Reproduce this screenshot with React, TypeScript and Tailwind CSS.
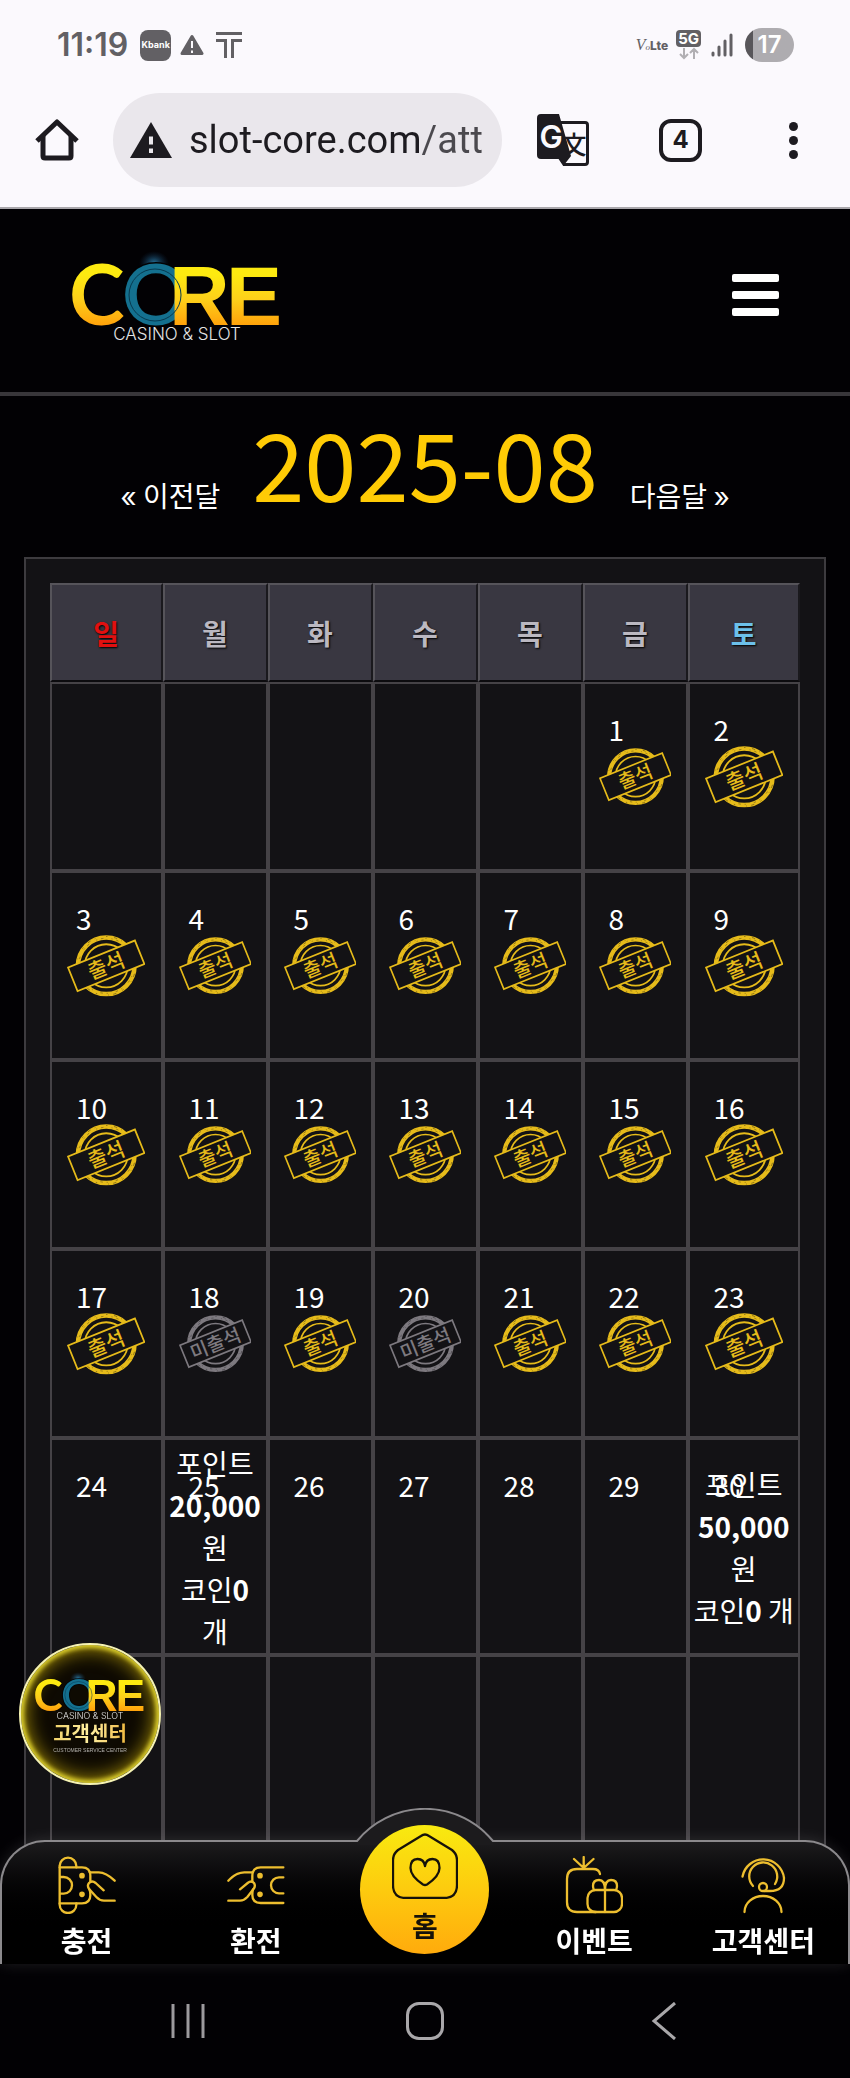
import { ReactNode } from "react";

const GOLD = "#edbe2f";

interface LogoProps {
  id: string;
  className?: string;
}

const CoreLogo = ({ id, className }: LogoProps) => {
  return (
    <svg viewBox="0 0 210 92" className={`overflow-visible ${className}`} role="img" aria-label="CORE CASINO & SLOT">
      <defs>
        <linearGradient id={`${id}-gold`} gradientUnits="userSpaceOnUse" x1="0" y1="16" x2="0" y2="78">
          <stop offset="0.15" stopColor="#fdea10" />
          <stop offset="0.55" stopColor="#fdd01a" />
          <stop offset="1" stopColor="#ff9f0a" />
        </linearGradient>
        <radialGradient id={`${id}-glow`}>
          <stop offset="0" stopColor="#2f8fc0" stopOpacity="0.8" />
          <stop offset="1" stopColor="#12355a" stopOpacity="0" />
        </radialGradient>
      </defs>
      <ellipse cx="82" cy="14" rx="15" ry="12" fill={`url(#${id}-glow)`} />
      <g fontFamily="Lato, sans-serif" fontSize="84" fontWeight="700">
        <text x="-3 50 97 154" y="76" fill={`url(#${id}-gold)`}>
          C
          <tspan fill="#14708f" stroke="#020204" strokeWidth="3" paintOrder="stroke">O</tspan>
          <tspan fontFamily="'Liberation Sans'">RE</tspan>
        </text>
      </g>
      <circle cx="83" cy="46" r="26" fill="none" stroke="#073a50" strokeWidth="1" />
      <text x="105" y="91" textAnchor="middle" fontFamily="Inter, sans-serif" fontSize="17" fontWeight="300" fill="#e4e4e4">
        CASINO &amp; SLOT
      </text>
    </svg>
  );
};

const Stamp = ({ missed }: { missed?: boolean }) => {
  const color = missed ? "#7d797f" : "#e6bb1a";
  return (
    <svg viewBox="-2 -2 221 180" className="mx-auto w-[72%]">
      <circle cx="109" cy="88" r="80" fill="none" stroke={color} strokeWidth="13" />
      <circle cx="109" cy="88" r="83" fill="none" stroke="#131215" strokeOpacity="0.6" strokeWidth="2" strokeDasharray="4 19 9 13 2 31" />
      <circle cx="109" cy="88" r="78" fill="none" stroke="#131215" strokeOpacity="0.5" strokeWidth="2" strokeDasharray="7 23 3 11" />
      <circle cx="109" cy="88" r="61" fill="none" stroke={color} strokeWidth="5" />
      <g transform="rotate(-22 109 88)">
        <rect x="7" y="52" width="204" height="72" fill="#131215" stroke={color} strokeWidth="5" />
        <text x="109" y="109" textAnchor="middle" fontFamily="'Noto Sans CJK KR', sans-serif" fontSize="58" fontWeight="500" fill={color}>
          {missed ? "미출석" : "출석"}
        </text>
      </g>
    </svg>
  );
};

const StatusBar = () => {
  return (
    <div className="flex h-[34px] items-center justify-between pr-14 pl-[57px] text-[#626064]">
      <div className="flex items-center">
        <span className="font-[Inter] text-[32px] leading-[34px] font-semibold">11:19</span>
        <span className="ml-3 grid h-[31px] w-[31px] place-content-center rounded-lg bg-[#626064] font-[Inter] text-[9px] font-bold text-white">
          Kbank
        </span>
        <svg viewBox="0 0 24 22" className="ml-[9px] w-6">
          <path d="M12 2.500 22 19.500H2Z" fill="#626064" stroke="#626064" strokeWidth="3" strokeLinejoin="round" />
          <path d="M12 7v7M12 16.500v2.500" stroke="#fbf9fd" strokeWidth="2" />
        </svg>
        <svg viewBox="0 0 26 26" className="ml-3 w-[26px]" fill="none" stroke="#626064" strokeWidth="3">
          <path d="M0 1.500H26M0 8.500H9.500V26M26 8.500H16.500V26" />
        </svg>
      </div>
      <div className="flex items-center">
        <span className="flex items-baseline">
          <i className="font-['Liberation_Serif'] text-[16px]">V</i>
          <i className="font-['Liberation_Serif'] text-[9px]">o</i>
          <b className="font-[Inter] text-[12px] font-extrabold">Lte</b>
        </span>
        <span className="ml-2 flex flex-col items-center">
          <span className="rounded-[4px] bg-[#626064] px-[2px] font-[Inter] text-[15px] leading-[17px] font-bold text-white">5G</span>
          <svg viewBox="0 0 20 13" className="w-5" fill="none" stroke="#b1afb3" strokeWidth="2">
            <path d="M5 1v10M1 7l4 4 4-4M15 12V2M11 6l4-4 4 4" />
          </svg>
        </span>
        <svg viewBox="0 0 22 24" className="ml-[10px] w-[22px]" stroke="#626064" strokeWidth="3" strokeLinecap="round">
          <path d="M2 20v2M8 14v8M14 8v14M20 2v20" />
        </svg>
        <span className="ml-3 grid h-[34px] w-[49px] place-content-center rounded-full bg-linear-to-r from-[#58565a] from-[17%] to-[#aeacb0] to-[17%] font-[Inter] text-[24px] leading-[34px] font-semibold text-white">
          17
        </span>
      </div>
    </div>
  );
};

const BrowserBar = () => {
  return (
    <div className="mt-[31px] flex items-center pr-[52px] pl-[35px]">
      <button aria-label="Home">
        <svg viewBox="0 0 44 44" className="w-11" fill="none" stroke="#1d1b20" strokeWidth="5">
          <path d="M2 23 22 4l20 19" strokeLinejoin="round" />
          <path d="M8 18v20q0 2 2 2h24q2 0 2-2V18" />
        </svg>
      </button>
      <label className="ml-[34px] flex h-[94px] min-w-0 flex-1 items-center rounded-full bg-[#eae7ec] pr-4 pl-[17px]">
        <svg viewBox="0 0 42 36" className="w-[42px] shrink-0" aria-label="Not secure">
          <path d="M21 0 42 36H0Z" fill="#1d1b20" />
          <path d="M21 14.500v8M21 26.500v4.500" stroke="#eae7ec" strokeWidth="4" />
        </svg>
        <input
          aria-label="Address"
          defaultValue="slot-core.com/att"
          className="ml-[17px] w-full min-w-0 bg-linear-to-r from-[#1d1b20] from-[232px] to-[#4b494e] to-[232px] bg-clip-text font-[Roboto] text-[38px] leading-[48px] text-transparent outline-none"
        />
      </label>
      <button aria-label="Translate" className="ml-[35px]">
        <svg viewBox="0 0 52 52" className="w-[52px]">
          <path d="M21 8.500H48q2.500 0 2.500 2.500V48q0 2.500-2.500 2.500H27L20 40" fill="none" stroke="#1d1b20" strokeWidth="3" />
          <text x="37" y="40" textAnchor="middle" fontSize="25" fontWeight="500" fontFamily="'Noto Sans CJK KR', sans-serif" fill="#1d1b20">文</text>
          <path d="M4 0H22L34 42 27 51 24 45H4Q0 45 0 41V4Q0 0 4 0Z" fill="#1d1b20" />
          <text x="14" y="34" textAnchor="middle" fontSize="31" fontWeight="600" fontFamily="Inter, sans-serif" fill="#fbf9fd">G</text>
        </svg>
      </button>
      <button aria-label="Tabs" className="ml-[70px] grid h-[43px] w-[43px] place-content-center rounded-xl border-4 border-[#1d1b20] font-[Inter] text-[24px] leading-6 font-bold text-[#1d1b20]">
        4
      </button>
      <button aria-label="Menu" className="ml-[87px] flex flex-col gap-[5px]">
        <span className="size-[9px] rounded-full bg-[#1d1b20]" />
        <span className="size-[9px] rounded-full bg-[#1d1b20]" />
        <span className="size-[9px] rounded-full bg-[#1d1b20]" />
      </button>
    </div>
  );
};

const SiteHeader = () => {
  return (
    <header className="flex items-center justify-between border-b-4 border-[#38363a] pt-10 pr-[71px] pb-[51px] pl-[72px]">
      <a href="#">
        <CoreLogo id="header" className="w-[210px]" />
      </a>
      <button aria-label="메뉴" className="flex w-[47px] flex-col gap-[9px]">
        <span className="h-2 rounded-[2px] bg-white" />
        <span className="h-2 rounded-[2px] bg-white" />
        <span className="h-2 rounded-[2px] bg-white" />
      </button>
    </header>
  );
};

const days = [
  { name: "일", color: "text-[#e01010]" },
  { name: "월", color: "text-[#bbb8c1]" },
  { name: "화", color: "text-[#bbb8c1]" },
  { name: "수", color: "text-[#bbb8c1]" },
  { name: "목", color: "text-[#bbb8c1]" },
  { name: "금", color: "text-[#bbb8c1]" },
  { name: "토", color: "text-[#6cc0ea]" },
];

// 2025-08 starts on a Friday
const FIRST_DAY = 5;
const LAST_DATE = 30;
const TODAY = 23;
const MISSED = [18, 20];

const rewards: Record<number, ReactNode> = {
  25: (
    <>
      포인트<br /><b>20,000</b><br />원<br />코인<b>0</b><br />개
    </>
  ),
  30: (
    <>
      포인트<br /><b>50,000</b><br />원<br />코인<b>0</b> 개
    </>
  ),
};

const DayCell = ({ date }: { date: number }) => {
  const valid = date > 0 && date <= LAST_DATE;
  return (
    <td className="relative border-2 border-[#454246] p-0 text-center align-middle">
      {valid && <span className="absolute top-6 left-6">{date}</span>}
      {valid && date <= TODAY && <Stamp missed={MISSED.includes(date)} />}
      {rewards[date]}
    </td>
  );
};

const Calendar = () => {
  return (
    <div className="mx-6 border-2 border-[#3d3b3f] bg-[#131215] p-6">
      <table className="w-full table-fixed border-separate border-spacing-0 text-[28px] leading-[42px] text-white">
        <colgroup>
          {days.map((day, i) => (
            <col key={day.name} className={i === 0 || i === 6 ? "w-[15%]" : "w-[14%]"} />
          ))}
        </colgroup>
        <thead>
          <tr className="h-[99px]">
            {days.map((day) => (
              <th
                key={day.name}
                className={`border-2 border-t-[#56545a] border-r-[#1a191d] border-b-[#0c0b0e] border-l-[#56545a] bg-[#393741] p-0 font-bold text-shadow-[1px_1px_2px_#000] ${day.color}`}
              >
                {day.name}
              </th>
            ))}
          </tr>
        </thead>
        <tbody>
          {[0, 1, 2, 3, 4, 5].map((week) => (
            <tr key={week} className={week === 4 ? "h-[217px]" : "h-[189px]"}>
              {days.map((day, i) => (
                <DayCell key={day.name} date={week * 7 + i + 1 - FIRST_DAY} />
              ))}
            </tr>
          ))}
        </tbody>
      </table>
    </div>
  );
};

const iconProps = {
  className: "h-[58px] w-[58px]",
  fill: "none",
  stroke: GOLD,
  strokeLinecap: "round" as const,
  strokeLinejoin: "round" as const,
};

const DepositIcon = () => (
  <svg viewBox="168 708 174 174" strokeWidth="7" {...iconProps}>
    <path d="M173 736V855M173 738a25 25 0 0 1 50 0V742M173 854a25 25 0 0 0 50 0V850" />
    <path d="M173 742H240Q265 742 265 767V786M262 808Q265 814 265 825 265 850 240 850H173" />
    <path d="M175 771H185a25 25 0 0 1 0 50H175" />
    <path d="M263 757H290Q312 757 338 782M305 811 281 789Q270 780 261 789 254 798 262 808L283 831Q293 842 306 842H338" />
    <circle cx="240" cy="767" r="5" fill={GOLD} />
    <circle cx="240" cy="823" r="5" fill={GOLD} />
  </svg>
);

const WithdrawIcon = () => (
  <svg viewBox="679 708 174 174" strokeWidth="7" {...iconProps}>
    <path d="M848 742H780Q755 742 755 767V786M757 808Q755 814 755 825 755 849 780 849H848" />
    <path d="M848 772H835a24 24 0 0 0 0 48H848" />
    <path d="M683 782Q706 757 731 757H757M718 808 741 789Q752 780 760 789 766 798 758 808L740 831Q730 842 718 842H683" />
    <circle cx="778" cy="767" r="5" fill={GOLD} />
    <circle cx="778" cy="823" r="5" fill={GOLD} />
  </svg>
);

const EventIcon = () => (
  <svg viewBox="0 0 58 58" strokeWidth="2.300" {...iconProps}>
    <path d="M18.700 12V1M18.700 12 9 3M18.700 12 28.500 3" />
    <path d="M35 18Q34 13 28 13H12Q2 13 2 23V46Q2 56 12 56H31" />
    <rect x="22.500" y="34" width="34.500" height="22" rx="8" />
    <path d="M40 34V56M40 34Q40 24 34 24 28 24 28 30 28 32 29 34M40 34Q40 24 46 24 52 24 52 30 52 32 51 34" />
  </svg>
);

const SupportIcon = () => (
  <svg viewBox="0 0 58 58" strokeWidth="2.300" {...iconProps}>
    <path d="M8.500 20.500A21 21 0 0 1 50 22Q50 35 36 35H30" />
    <path d="M19 30A14 14 0 1 1 41 28" />
    <circle cx="29" cy="31" r="4" />
    <path d="M10.500 56A18.500 16 0 0 1 47.500 56" />
  </svg>
);

const HomeIcon = () => (
  <svg viewBox="0 0 66 66" className="h-[66px] w-[66px]" fill="none" stroke="#16120a" strokeWidth="2.300" strokeLinejoin="round">
    <path d="M29 3Q33 0 37 3L60 17Q65 21 65 27V52Q65 65 52 65H14Q1 65 1 52V27Q1 21 6 17Z" />
    <path d="M33 33Q32 26 25.500 26 18.500 26 18.500 35 18.500 43 31 51.500 33 52.500 35 51.500 47.500 43 47.500 35 47.500 26 40.500 26 34 26 33 33Z" />
  </svg>
);

interface NavItemProps {
  icon: ReactNode;
  label: string;
}

const NavItem = ({ icon, label }: NavItemProps) => (
  <a href="#" className="flex flex-col items-center gap-3 pt-[14px] whitespace-nowrap">
    {icon}
    <span>{label}</span>
  </a>
);

const BottomNav = () => {
  return (
    <nav className="relative grid h-[124px] grid-cols-5 items-start rounded-t-[45px] border-2 border-b-0 border-[#8b898c] bg-linear-to-b from-[#1c1b1d] to-black to-75% text-[28px] leading-7 font-bold text-white shadow-[0_0_16px_rgba(255,255,255,0.12)]">
      <svg viewBox="0 0 140 37" className="absolute -top-[34px] left-1/2 w-[140px] -translate-x-1/2">
        <path d="M2 33A88 88 0 0 1 138 33V37H2Z" fill="#1c1b1d" />
        <path d="M1 33H2A88 88 0 0 1 138 33H139" fill="none" stroke="#8b898c" strokeWidth="2" />
      </svg>
      <NavItem icon={<DepositIcon />} label="충전" />
      <NavItem icon={<WithdrawIcon />} label="환전" />
      <a
        href="#"
        className="relative -mt-[17px] flex h-[129px] w-[129px] flex-col items-center gap-3 justify-self-center rounded-full bg-linear-to-b from-[#f8ea10] to-[#ffab0c] pt-2 text-[#16120a]"
      >
        <HomeIcon />
        <span>홈</span>
      </a>
      <NavItem icon={<EventIcon />} label="이벤트" />
      <NavItem icon={<SupportIcon />} label="고객센터" />
    </nav>
  );
};

const SystemNav = () => {
  return (
    <div className="grid h-[114px] grid-cols-[1fr_auto_1fr] items-center">
      <button aria-label="Recents" className="ml-[171px] justify-self-start">
        <svg viewBox="0 0 34 38" className="w-[34px]" stroke="#9c9a9d" strokeWidth="3">
          <path d="M2 2V36M17 2V36M32 2V36" />
        </svg>
      </button>
      <button aria-label="Home" className="h-[38px] w-[38px] rounded-[13px] border-[3px] border-[#a9a7aa]" />
      <button aria-label="Back" className="mr-[174px] justify-self-end">
        <svg viewBox="0 0 25 38" className="w-[25px]" fill="none" stroke="#a9a7aa" strokeWidth="3">
          <path d="M24 1 3 19 24 37" />
        </svg>
      </button>
    </div>
  );
};

const SupportBadge = () => {
  return (
    <a
      href="#"
      className="fixed bottom-[293px] left-[19px] flex h-[142px] w-[142px] flex-col items-center rounded-full border-2 border-[#f6f3b4] bg-[#0e0a02] pt-[26px] shadow-[inset_0_0_4px_3px_#d9cc2c,inset_0_0_18px_6px_#8f7a06]"
    >
      <CoreLogo id="badge" className="w-[110px]" />
      <span className="mt-1 bg-linear-to-r from-[#f2d36a] via-[#fff0a0] to-[#f0b93c] bg-clip-text text-[20px] leading-5 font-bold text-transparent">
        고객센터
      </span>
      <span className="mt-1 font-['Liberation_Sans'] text-[5px] leading-[6px] text-[#b5b3ae]">CUSTOMER SERVICE CENTER</span>
    </a>
  );
};

const App = () => {
  return (
    <div className="min-h-screen bg-[#020104] font-['Noto_Sans_CJK_KR',sans-serif]">
      <div className="border-b-2 border-[#a9a7ab] bg-[#fbf9fd] pt-7 pb-5">
        <StatusBar />
        <BrowserBar />
      </div>
      <SiteHeader />
      <main>
        <div className="flex items-end justify-center gap-8 pt-[18px] pb-[49px] text-[28px] leading-[22px] whitespace-nowrap text-white">
          <a href="#">
            <span className="font-[Inter]">«</span> 이전달
          </a>
          <h1 className="text-[94px] leading-[94px] text-[#ffcb05]">2025-08</h1>
          <a href="#">
            다음달 <span className="font-[Inter]">»</span>
          </a>
        </div>
        <Calendar />
      </main>
      <SupportBadge />
      <footer className="fixed inset-x-0 bottom-0 bg-linear-to-b from-transparent from-[46px] to-[#020104] to-[46px]">
        <BottomNav />
        <SystemNav />
      </footer>
    </div>
  );
};

export default App;
